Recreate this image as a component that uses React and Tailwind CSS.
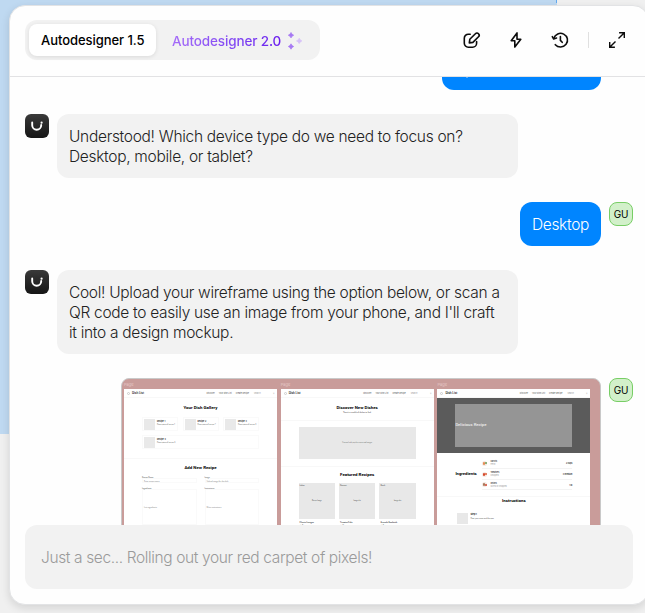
const ink = "text-[#222]";

function BotAvatar() {
  return (
    <div className="flex h-6 w-6 shrink-0 items-center justify-center rounded-md bg-linear-to-b from-[#3a3a3a] to-[#161616]">
      <svg width="24" height="24" viewBox="0 0 24 24" fill="none">
        <path d="M7.200 8.400v2.800a4.500 4.500 0 0 0 9 0v-.2" stroke="#fff" strokeWidth="1.900" strokeLinecap="round" />
        <circle cx="16.600" cy="8.700" r="1.100" fill="#fff" />
      </svg>
    </div>
  );
}

function UserAvatar() {
  return (
    <div className="flex h-6 w-6 shrink-0 items-center justify-center rounded-lg border border-[#78ce66] bg-[#d2f0ca] text-[10px] leading-none tracking-[-0.1px] text-black">
      GU
    </div>
  );
}

function BotMessage({ lines }) {
  return (
    <div className="flex items-start gap-2">
      <BotAvatar />
      <div className={`w-[461px] rounded-xl bg-[#f2f2f2] px-3 pt-[13px] pb-[11px] text-[15.5px] leading-5 font-light tracking-[-0.3px] ${ink}`}>
        {lines.map((l) => (
          <div key={l} className="whitespace-nowrap">{l}</div>
        ))}
      </div>
    </div>
  );
}

function PageHeader() {
  return (
    <div className="flex h-[9px] shrink-0 items-center border-b border-[#f8f8f8] pr-[3px] pl-[3px] text-[2px] leading-none text-[#555]">
      <span className="h-[3px] w-[3px] rounded-full border-[0.5px] border-[#ccc]" />
      <span className="ml-[2px] text-[2.9px] font-semibold text-[#222]">Dish List</span>
      <span className="ml-auto">Discover</span>
      <span className="ml-[4px]">Your Dish List</span>
      <span className="ml-[4px]">Create Recipe</span>
      <span className="ml-[5px] flex w-[20px] justify-between text-[#999]">
        <span>Search</span>
        <span>⚲</span>
      </span>
    </div>
  );
}

function Page({ children }) {
  return (
    <div className="flex w-[153px] shrink-0 flex-col">
      <div className="h-[10px] shrink-0 pt-[2.5px] text-[4px] leading-[5px] text-[#e6c8c7]">Page</div>
      <div className="flex h-[141px] flex-col overflow-hidden bg-white">
        <PageHeader />
        {children}
      </div>
    </div>
  );
}

function Heading({ children }) {
  return <div className="text-center font-['Roboto','Inter',sans-serif] text-[4.4px] leading-[5px] font-bold whitespace-nowrap text-black">{children}</div>;
}

function RecipeCard({ n, wide }) {
  return (
    <div className={`flex h-[14px] gap-[2px] border-[0.5px] border-[#fafafa] p-[1px] leading-none ${wide ? "w-[117px]" : "w-[36px]"}`}>
      <div className="h-[11px] w-[11px] shrink-0 bg-[#e9e9e9]" />
      <div className="pt-[0.5px] whitespace-nowrap">
        <div className="text-[2.1px] leading-[3.5px] font-semibold text-[#222]">Recipe {n}</div>
        <div className="text-[1.7px] leading-[3px] text-[#555]">Description of recipe {n}</div>
      </div>
    </div>
  );
}

function GalleryPage() {
  return (
    <Page>
      <div className="h-[61px] shrink-0 border-b border-[#f8f8f8] px-[18px] pt-[7px]">
        <Heading>Your Dish Gallery</Heading>
        <div className="mt-[7px] flex w-[117px] flex-wrap gap-x-[4.5px] gap-y-[4px]">
          <RecipeCard n={1} /><RecipeCard n={2} /><RecipeCard n={3} />
          <RecipeCard n={4} wide />
        </div>
      </div>
      <div className="px-[18px] pt-[6px]">
        <Heading>Add New Recipe</Heading>
        <div className="mt-[6px] grid grid-cols-2 gap-x-[8px] text-[1.8px] leading-[2px] text-[#555]">
          {[["Recipe Name", "Enter recipe name", "Ingredients", "List ingredients"], ["Image", "Upload image for the dish", "Instructions", "Write instructions"]].map((c) => (
            <div key={c[0]}>
              <div>{c[0]}</div>
              <div className="mb-[4px] h-[5px] border-[0.5px] border-[#fafafa] px-[1px] pt-[1px] text-[#888]">{c[1]}</div>
              <div>{c[2]}</div>
              <div className="h-[36px] border-[0.5px] border-[#fafafa] px-[1px] pt-[16px] text-[#888]">{c[3]}</div>
            </div>
          ))}
        </div>
      </div>
    </Page>
  );
}

function DiscoverPage() {
  return (
    <Page>
      <div className="h-[23px] shrink-0 border-b border-[#f8f8f8] pt-[7px]">
        <Heading>Discover New Dishes</Heading>
        <div className="mt-[1px] text-center text-[1.8px] leading-[3px] text-[#444]">There’s a wealth of dishes to find.</div>
      </div>
      <div className="flex h-[46px] shrink-0 justify-center border-b border-[#f8f8f8] pt-[6px]">
        <div className="flex h-[32px] w-[117px] items-center justify-center bg-[#e8e8e8] text-[1.5px] leading-none text-[#666]">Carousel with popular recipes and images</div>
      </div>
      <div className="flex flex-col items-center pt-[5px]">
        <Heading>Featured Recipes</Heading>
        <div className="mt-[6px] flex gap-[4px] text-[1.8px] leading-[2px] whitespace-nowrap text-[#444]">
          {[["Italian", "Recipe Image", "Classic Lasagna"], ["Dessert", "Image slot", "Tiramisu Cake"], ["Quick", "Image slot", "Avocado Sandwich"]].map((c) => (
            <div key={c[0]} className="w-[36.4px]">
              <div className="h-[36px] bg-[#e8e8e8] px-[1px] pt-[1px]">
                <div>{c[0]}</div>
                <div className="pt-[14px] text-center text-[1.5px]">{c[1]}</div>
              </div>
              <div className="px-[1px] pt-[1.5px] font-bold">{c[2]}</div>
              <div className="px-[1px] pt-[1px]"><b>★</b> Rating</div>
            </div>
          ))}
        </div>
      </div>
    </Page>
  );
}

const ingredients = [
  { name: "Carrots", note: "Fresh", qty: "2 cups", a: "bg-[#e58b55]", b: "bg-[#6b9b55]" },
  { name: "Tomatoes", note: "Chopped", qty: "3 medium", a: "bg-[#d4492c]", b: "bg-[#e0603a]" },
  { name: "Onions", note: "Sliced or chopped", qty: "1 lb", a: "bg-[#a77a5b]", b: "bg-[#d3452f]" },
];

function RecipePage() {
  return (
    <Page>
      <div className="flex h-[55px] shrink-0 justify-center bg-[#5b5b5b] pt-[6px]">
        <div className="flex h-[43px] w-[117px] items-center bg-[#959595] font-['Roboto','Inter',sans-serif] text-[4.2px] leading-none font-medium text-[#ececec]">Delicious Recipe</div>
      </div>
      <div className="flex h-[44px] shrink-0 items-center border-b border-[#f8f8f8] px-[18px]">
        <div className="w-[27px] font-['Roboto','Inter',sans-serif] text-[4.2px] leading-none font-bold text-black">Ingredients</div>
        <div className="flex-1">
          {ingredients.map((i) => (
            <div key={i.name} className="flex h-[10.6px] items-center border-b-[0.5px] border-[#f3f3f3] leading-none">
              <span className="flex h-[5px] w-[5px] items-center justify-center rounded-full bg-[#f4e8e2]">
                <span className={`h-[3px] w-[2px] rounded-full ${i.a}`} /><span className={`h-[2px] w-[1.5px] rounded-full ${i.b}`} />
              </span>
              <span className="ml-[3px] text-[1.9px] leading-[3px]">
                <span className="block font-medium text-[#222]">{i.name}</span>
                <span className="block text-[#999]">{i.note}</span>
              </span>
              <span className="ml-auto text-[2px] font-semibold text-[#222]">{i.qty}</span>
            </div>
          ))}
        </div>
      </div>
      <div className="px-[18px] pt-[1px]">
        <Heading>Instructions</Heading>
        <div className="mt-[9px] flex h-[14px] gap-[2px] p-[1px] pl-[2px]">
          <div className="h-[11px] w-[11px] bg-[#e8e8e8]" />
          <div className="leading-none">
            <div className="text-[2.2px] leading-[3.5px] font-bold text-[#222]">Step 1</div>
            <div className="text-[1.8px] leading-[3px] text-[#555]">Heat your oven and the pan</div>
          </div>
        </div>
      </div>
    </Page>
  );
}

function Sparkles() {
  return (
    <svg width="16" height="18" viewBox="0 0 16 18" className="ml-[6px]" strokeWidth=".7" strokeLinejoin="round">
      <path d="M4 .5L5 2.200L6.700 3.200L5 4.200L4 5.900L3 4.200L1.300 3.200L3 2.200Z" fill="#a678f3" stroke="#a678f3" />
      <path d="M4 11.800L5 13.500L6.700 14.500L5 15.500L4 17.200L3 15.500L1.300 14.500L3 13.500Z" fill="#a678f3" stroke="#a678f3" />
      <path d="M12.200 6.200L13.200 7.900L14.900 8.900L13.200 9.900L12.200 11.600L11.200 9.900L9.500 8.900L11.200 7.900Z" fill="#d6c0f8" stroke="#d6c0f8" />
    </svg>
  );
}

function HeaderActions() {
  const p = { width: 20, height: 20, viewBox: "0 0 20 20", fill: "none", stroke: "#0c0c0c", strokeWidth: 1.6, strokeLinecap: "round", strokeLinejoin: "round" };
  return (
    <div className="flex items-center">
      <svg {...p}>
        <path d="M8.200 4.200H6.300A4 4 0 0 0 2.300 8.200V13.200A4 4 0 0 0 6.300 17.200H10.600A4 4 0 0 0 14.600 13.200V11.600" />
        <path d="M7.800 9.300L13.400 3.700A2.150 2.150 0 0 1 16.500 6.800L10.900 12.400L7.300 12.900Z" />
      </svg>
      <svg {...p} className="ml-6"><path d="M11 2.900L5.200 10.700H8.800V17.100L14.800 9.300H11Z" /></svg>
      <svg {...p} className="ml-6">
        <path d="M3.800 8.200A7 6.800 0 1 1 5.300 14.700" />
        <path d="M2.300 6.600L3.700 9L6.500 8.100" />
        <path d="M10.400 6.500V10.400L12.200 12.300" />
      </svg>
      <span className="ml-[18px] h-4 w-px bg-[#e0e0e0]" />
      <svg {...p} className="ml-[18px]" strokeWidth="1.400" strokeLinejoin="miter" strokeLinecap="butt">
        <path d="M12.100 2.800H17.300V8M17.300 2.800L11.500 8.600M7.900 17.200H2.700V12M2.700 17.200L8.500 11.400" />
      </svg>
    </div>
  );
}

export default function App() {
  return (
    <div className="relative h-[613px] w-[645px] overflow-hidden bg-[#f0f0f0] font-['Inter','Liberation_Sans',sans-serif]">
      <div className="absolute top-0 left-0 h-[434px] w-[557px] border-r border-dashed border-[#62aaf0] bg-[#bfd9f1]" />
      <div className="absolute top-[5px] left-[9px] flex h-[600px] w-[640px] flex-col rounded-2xl border border-[#e2e3e5] bg-[#fefefe] shadow-[0_3px_8px_rgba(0,0,0,0.12)]">
        <header className="flex h-[71px] shrink-0 items-center justify-between border-b border-[#e2e2e4] pr-[21px] pb-[2px] pl-[15px]">
          <div className="flex h-10 w-[295px] items-center rounded-xl bg-[#f2f2f2] p-1">
            <div className="flex h-8 w-[127px] items-center rounded-lg bg-white pt-[2px] pl-3 text-[13px] font-[450] whitespace-nowrap text-black shadow-[0_1px_4px_rgba(0,0,0,0.1)]"><span className="tracking-[-0.05px]">Autodesigner 1.5</span></div>
            <div className="flex items-center pt-[2px] pl-4">
              <span className="bg-linear-to-r from-[#a56bf8] to-[#6a19ee] bg-clip-text text-[13.500px] font-[450] tracking-[-0.13px] whitespace-nowrap text-transparent">Autodesigner 2.0</span>
              <Sparkles />
            </div>
          </div>
          <HeaderActions />
        </header>

        <main className="flex h-[448px] shrink-0 flex-col gap-6 overflow-hidden pr-[15px] pl-[15px]">
          <div className="mr-8 h-[13px] w-[159px] shrink-0 self-end rounded-b-xl bg-[#0085ff] pl-6">
            <div className="h-px w-[2px] bg-[#5aaeff]" />
          </div>
          <BotMessage lines={["Understood! Which device type do we need to focus on?", "Desktop, mobile, or tablet?"]} />
          <div className="flex items-start justify-end gap-2">
            <div className="flex h-11 w-[81px] items-center justify-center rounded-xl bg-[#0085ff] pt-[2px] text-[15.5px] leading-5 font-light tracking-[-0.3px] text-white">Desktop</div>
            <UserAvatar />
          </div>
          <BotMessage lines={[
            "Cool! Upload your wireframe using the option below, or scan a",
            "QR code to easily use an image from your phone, and I'll craft",
            "it into a design mockup.",
          ]} />
          <div className="flex items-start justify-end gap-2">
            <div className="flex h-[151px] w-[480px] gap-[3.700px] overflow-hidden rounded-t-lg border border-[#c9c9c9] bg-[#c99c9a] pl-[2px]">
              <GalleryPage />
              <DiscoverPage />
              <RecipePage />
            </div>
            <UserAvatar />
          </div>
        </main>

        <div className="mx-[15px] flex h-16 shrink-0 items-center rounded-xl bg-[#f2f2f2] px-4 pt-[2px] text-[15.5px] font-light text-[#9a9a9a]">
          <span className="tracking-[-0.37px] whitespace-nowrap">Just a sec... Rolling out your red carpet of pixels!</span>
        </div>
      </div>
    </div>
  );
}
